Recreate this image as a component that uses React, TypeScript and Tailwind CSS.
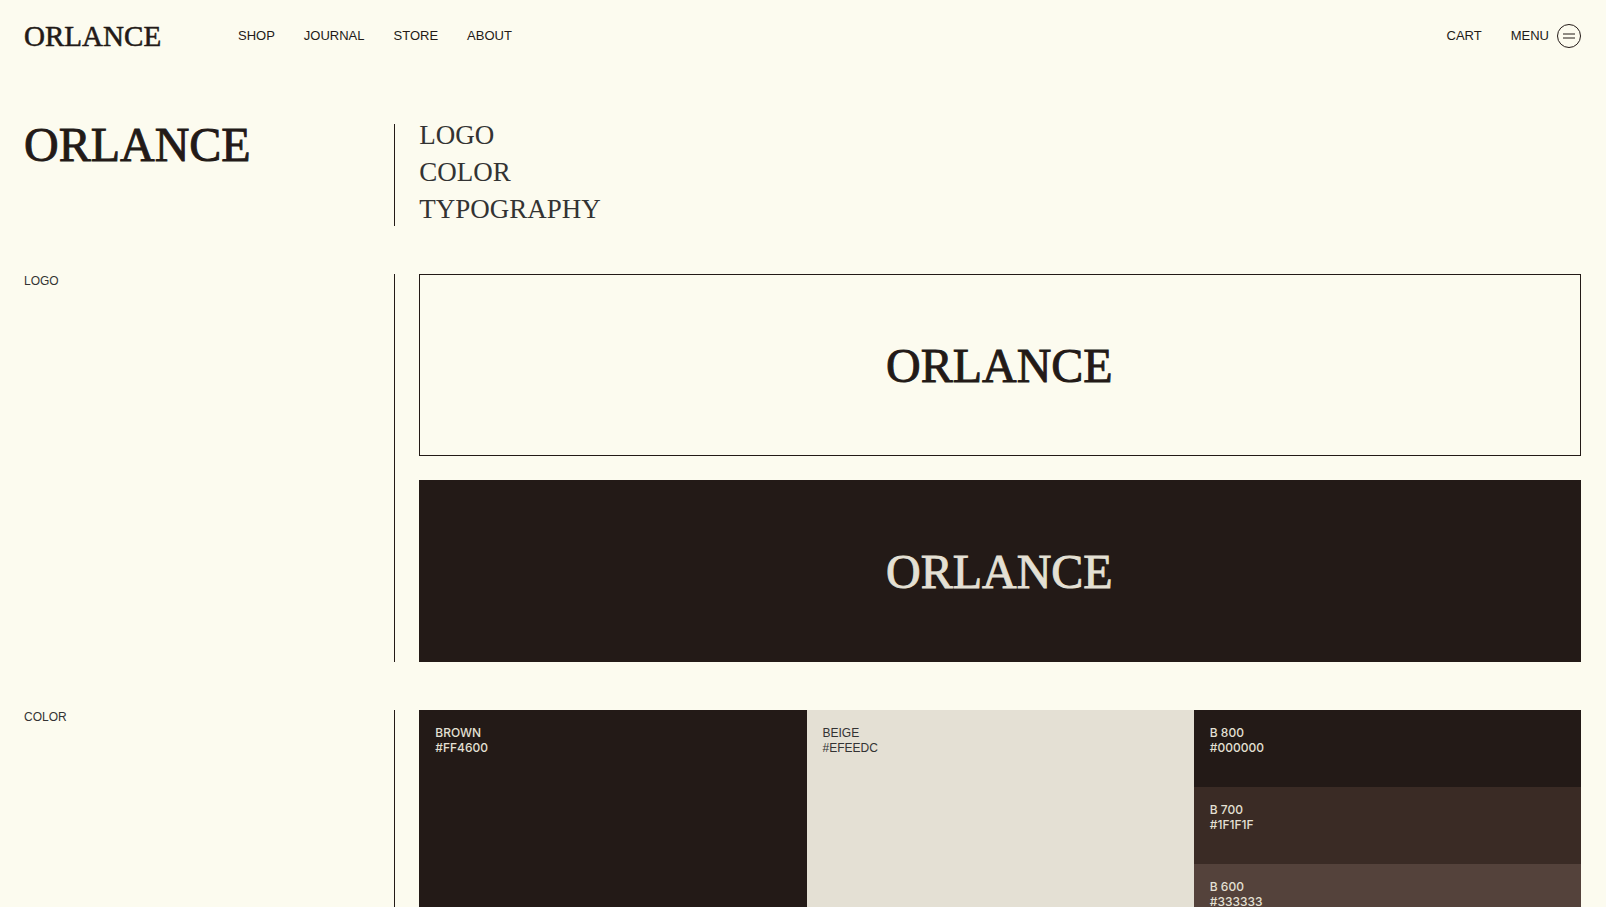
import type { ReactNode } from "react";

type LogoProps = { className: string };

function Logo({ className }: LogoProps) {
  return (
    <svg viewBox="0 0 228 56" className={className} role="img" aria-label="Orlance">
      <text
        x="0"
        y="45"
        fontSize="48"
        fontFamily="'Liberation Serif', serif"
        fill="currentColor"
        stroke="currentColor"
        strokeWidth="0.9"
      >
        ORLANCE
      </text>
    </svg>
  );
}

type SectionProps = { label: ReactNode; children: ReactNode; id?: string };

function Section({ label, children, id }: SectionProps) {
  return (
    <section id={id} className="grid grid-cols-12 gap-x-6">
      <div className="col-span-3 border-r border-[#231a17]">{label}</div>
      <div className="col-span-9">{children}</div>
    </section>
  );
}

const labelText = "text-[12px] leading-[15px] font-normal text-[#333333]";
const navLinks = ["SHOP", "JOURNAL", "STORE", "ABOUT"];
const contents = ["LOGO", "COLOR", "TYPOGRAPHY"];
const shades = [
  { name: "B 800", hex: "#000000", bg: "bg-[#231a17]" },
  { name: "B 700", hex: "#1F1F1F", bg: "bg-[#3a2b25]" },
  { name: "B 600", hex: "#333333", bg: "bg-[#54423b]" },
];

export default function App() {
  return (
    <div className="h-screen overflow-hidden bg-[#fcfbef] font-['Liberation_Sans',sans-serif] text-[12px] leading-[15px] text-[#231a17]">
      <header className="flex h-[72px] items-center pr-[25px] pl-6 text-[13px]">
        <a href="#top">
          <Logo className="h-[34px] w-[138px]" />
        </a>
        <nav className="ml-[76px] flex gap-[29px] pb-0.5">
          {navLinks.map((link) => (
            <a key={link} href={`#${link.toLowerCase()}`}>
              {link}
            </a>
          ))}
        </nav>
        <div className="ml-auto flex items-center gap-[29px]">
          <a href="#cart" className="pb-0.5">
            CART
          </a>
          <button type="button" className="flex items-center gap-2">
            <span className="pb-0.5">MENU</span>
            <svg viewBox="0 0 24 24" className="size-6" fill="none" stroke="currentColor">
              <circle cx="12" cy="12" r="11.5" />
              <path d="M6 10h12M6 14h12" />
            </svg>
          </button>
        </div>
      </header>

      <main id="top" className="flex flex-col gap-12 pt-[52px] pr-[25px] pl-6">
        <Section label={<Logo className="-mt-2 h-14 w-[228px]" />}>
          <ul className="flex flex-col gap-[15px] pb-1.5 font-['Liberation_Serif',serif] text-[27px] leading-[22px] text-[#333333]">
            {contents.map((item) => (
              <li key={item}>
                <a href={`#section-${item.toLowerCase()}`}>{item}</a>
              </li>
            ))}
          </ul>
        </Section>

        <Section id="section-logo" label={<h2 className={labelText}>LOGO</h2>}>
          <div className="flex flex-col gap-6">
            <div className="flex h-[182px] items-center justify-center border border-[#231a17]">
              <Logo className="h-14 w-[228px]" />
            </div>
            <div className="flex h-[182px] items-center justify-center bg-[#231a17] text-[#e4e0d4]">
              <Logo className="h-14 w-[228px]" />
            </div>
          </div>
        </Section>

        <Section id="section-color" label={<h2 className={labelText}>COLOR</h2>}>
          <div className="grid min-h-[385px] grid-cols-3">
            <div className="bg-[#231a17] px-4 pt-[15px] font-['Inter',sans-serif] font-medium text-[#e4e0d4]">
              <p>BROWN</p>
              <p>#FF4600</p>
            </div>
            <div className="bg-[#e4e0d4] px-4 pt-4 text-[#333333]">
              <p>BEIGE</p>
              <p>#EFEEDC</p>
            </div>
            <div className="flex flex-col">
              {shades.map((shade) => (
                <div
                  key={shade.name}
                  className={`h-[77px] px-4 pt-[15px] font-['Inter',sans-serif] font-medium text-[#e4e0d4] last:grow ${shade.bg}`}
                >
                  <p>{shade.name}</p>
                  <p>{shade.hex}</p>
                </div>
              ))}
            </div>
          </div>
        </Section>
      </main>
    </div>
  );
}
